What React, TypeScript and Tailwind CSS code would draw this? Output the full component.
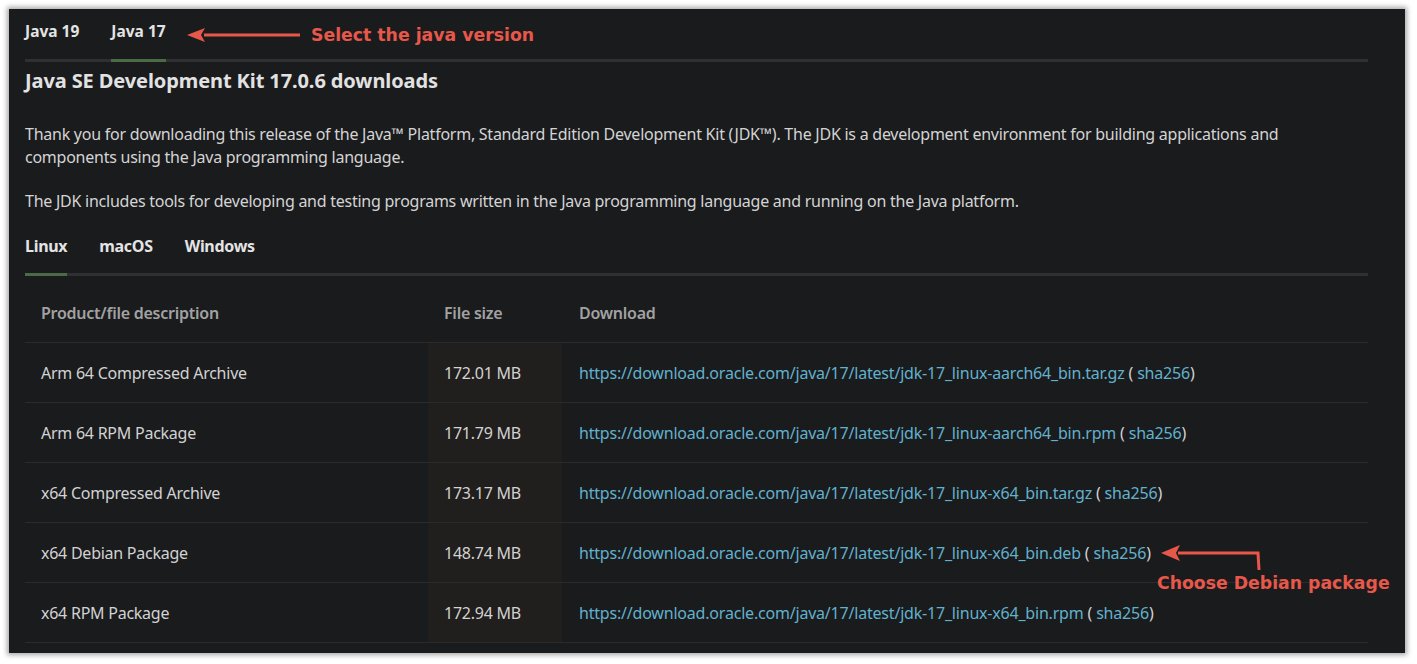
const rows = [
  { name: "Arm 64 Compressed Archive", size: "172.01 MB", file: "jdk-17_linux-aarch64_bin.tar.gz" },
  { name: "Arm 64 RPM Package", size: "171.79 MB", file: "jdk-17_linux-aarch64_bin.rpm" },
  { name: "x64 Compressed Archive", size: "173.17 MB", file: "jdk-17_linux-x64_bin.tar.gz" },
  { name: "x64 Debian Package", size: "148.74 MB", file: "jdk-17_linux-x64_bin.deb" },
  { name: "x64 RPM Package", size: "172.94 MB", file: "jdk-17_linux-x64_bin.rpm" },
];

function Tabs({ items, active, size }: { items: string[]; active: string; size: "sm" | "md" }) {
  return (
    <div className="flex gap-8 border-b-[3px] border-[#2e3032]">
      {items.map((t) => (
        <div
          key={t}
          className={
            "-mb-[3px] border-b-[3px] font-bold text-[#e4e4e4] " +
            (t === active ? "border-[#4a6b46] " : "border-transparent ") +
            (size === "sm"
              ? "pt-[12px] pb-[18px] text-[15.5px] leading-5"
              : "pb-[16px] text-[16px] leading-[22px] tracking-[-0.3px]")
          }
        >
          {t}
        </div>
      ))}
    </div>
  );
}

export default function App() {
  return (
    <div className="relative h-[664px] w-[1417px] bg-white pl-[9px] pr-[12px] pt-[9px] pb-[11px] font-['Noto_Sans',sans-serif]">
      <div className="h-full bg-[#1a1b1d] pl-4 pr-[37px] shadow-[0_0_5px_2px_rgba(0,0,0,0.35)]">
        <Tabs items={["Java 19", "Java 17"]} active="Java 17" size="sm" />

        <h1 className="mt-[5px] text-[20px] font-bold leading-7 tracking-[-0.1px] text-[#e2e2e2]">
          Java SE Development Kit 17.0.6 downloads
        </h1>

        <p className="mt-[28px] text-[16px] leading-[23px] tracking-[-0.25px] text-[#d4d4d4]">
          Thank you for downloading this release of the Java™ Platform, Standard Edition Development Kit (JDK™). The JDK
          is a development environment for building applications and
          <br />
          components using the Java programming language.
        </p>
        <p className="mt-[21px] text-[16px] leading-[23px] tracking-[-0.25px] text-[#d4d4d4]">
          The JDK includes tools for developing and testing programs written in the Java programming language and
          running on the Java platform.
        </p>

        <div className="mt-[22px]">
          <Tabs items={["Linux", "macOS", "Windows"]} active="Linux" size="md" />
        </div>

        <div className="mt-[8px] text-[16px] tracking-[-0.25px]">
          <div className="grid h-[59px] grid-cols-[403px_134px_1fr] items-center border-b border-[#2a2b2d] font-semibold text-[#a2a2a2]">
            <div className="pl-4">Product/file description</div>
            <div className="pl-4">File size</div>
            <div className="pl-[17px]">Download</div>
          </div>
          {rows.map((r) => (
            <div
              key={r.name}
              className="grid h-[60px] grid-cols-[403px_134px_1fr] border-b border-[#2a2b2d] text-[#d2d2d2]"
            >
              <div className="flex items-center pl-4">{r.name}</div>
              <div className="flex items-center bg-[#211f1d] pl-4">{r.size}</div>
              <div className="flex items-center pl-[17px] tracking-[-0.2px]">
                <span className="text-[#62b1cd]">https://download.oracle.com/java/17/latest/{r.file}</span>
                <span className="ml-1">(</span>
                <span className="ml-1 text-[#62b1cd]">sha256</span>
                <span>)</span>
              </div>
            </div>
          ))}
        </div>
      </div>

      {/* annotations */}
      <svg className="pointer-events-none absolute left-0 top-0" width="1417" height="664">
        <line x1="204" y1="35" x2="300" y2="35" stroke="#e8584a" strokeWidth="3" />
        <polygon points="187,35 205,28 201,35 205,42" fill="#e8584a" />
        <polyline points="1259,570 1258,553 1178,553" fill="none" stroke="#e8584a" strokeWidth="3" />
        <polygon points="1161,553 1180,545 1176,553 1180,561" fill="#e8584a" />
      </svg>
      <div className="absolute left-[311px] top-[23px] font-['DejaVu_Sans',sans-serif] text-[17.3px] font-bold leading-6 text-[#e8584a]">
        Select the java version
      </div>
      <div className="absolute left-[1157px] top-[571px] font-['DejaVu_Sans',sans-serif] text-[17.3px] font-bold leading-6 text-[#e8584a]">
        Choose Debian package
      </div>
    </div>
  );
}
